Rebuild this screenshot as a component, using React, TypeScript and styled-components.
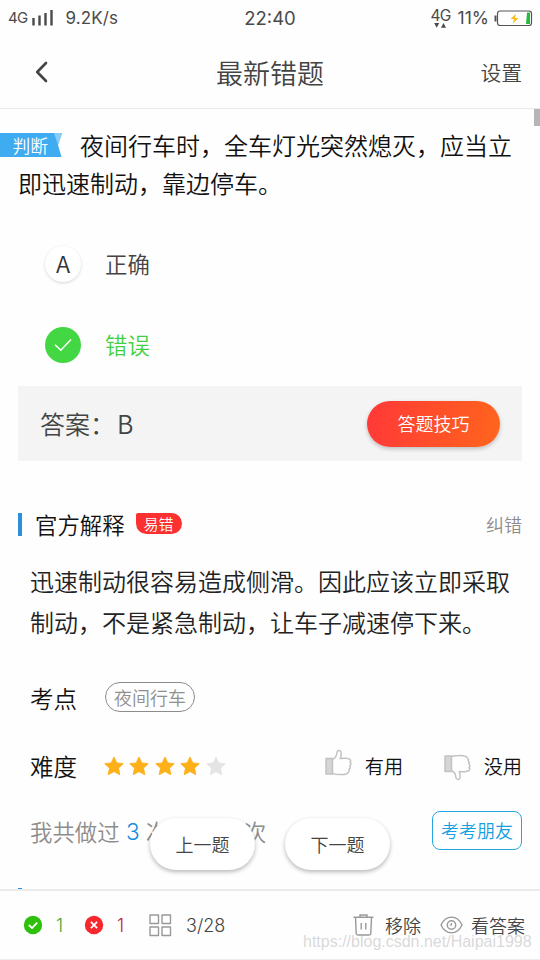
import React from "react";
import styled, { createGlobalStyle, css } from "styled-components";

const GlobalStyle = createGlobalStyle`
  *, *::before, *::after { box-sizing: border-box; }
  body {
    margin: 0;
    background: #fff;
    font-family: "Noto Sans CJK SC", sans-serif;
    font-weight: 350;
  }
`;

const latin = css`
  font-family: Inter, "Liberation Sans", sans-serif;
  font-weight: 400;
`;

const Screen = styled.div`
  position: relative;
  width: 540px;
  height: 960px;
  overflow: hidden;
  display: flex;
  flex-direction: column;
  background: #fefefe;
  color: #111;
`;

const StatusBar = styled.header`
  ${latin}
  flex: none;
  height: 37px;
  padding: 0 8px 1px 8px;
  display: grid;
  grid-template-columns: 1fr auto 1fr;
  align-items: center;
  color: #4a4a4a;
  line-height: 20px;
`;

const StatusGroup = styled.div<{ $end?: boolean }>`
  display: flex;
  align-items: center;
  justify-content: ${(p) => (p.$end ? "flex-end" : "flex-start")};
`;

const StatusText = styled.span<{ $size: number; $spacing?: number }>`
  font-size: ${(p) => p.$size}px;
  letter-spacing: ${(p) => p.$spacing ?? 0}px;
  white-space: nowrap;
`;

const SignalIcon = styled.svg`
  margin: 0 12px 0 5px;
`;

const DataIcon = styled.div`
  display: flex;
  flex-direction: column;
  align-items: center;
  margin-right: 7px;
  line-height: 14px;
`;

const BatteryIcon = styled.svg`
  margin-left: 5px;
  margin-right: -1px;
`;

const TitleBar = styled.nav`
  flex: none;
  height: 72px;
  padding: 0 18px 2px 34px;
  display: grid;
  grid-template-columns: 1fr auto 1fr;
  align-items: center;
  border-bottom: 1px solid #e9e9e9;
  color: #444;
`;

const PageTitle = styled.h1`
  margin: 2px 0 0 -16px;
  font-size: 27px;
  line-height: 40px;
  font-weight: 350;
`;

const Settings = styled.button`
  justify-self: end;
  padding: 0;
  border: 0;
  background: none;
  color: #444;
  font: 350 20.8px/30px "Noto Sans CJK SC", sans-serif;
`;

const Content = styled.main`
  flex: none;
  height: 780px;
  overflow: hidden;
  padding: 17px 18px 0;
`;

const Question = styled.section`
  font-size: 24px;
  line-height: 37.5px;
  color: #111;
  height: 75px;
`;

const QuestionLine = styled.div`
  display: flex;
  align-items: center;
  height: 37.5px;
  white-space: nowrap;
`;

const KindTag = styled.span`
  position: relative;
  flex: none;
  width: 62px;
  height: 24px;
  margin: 0 18px 0 -18px;
  padding-left: 12.5px;
  color: #fff;
  font-size: 17.8px;
  line-height: 25px;
`;

const KindRibbon = styled.svg`
  position: absolute;
  inset: 0;
  z-index: 0;
`;

const KindText = styled.span`
  position: relative;
`;

const Options = styled.ul`
  list-style: none;
  margin: 22px 0 0;
  padding: 0 0 1px;
`;

const Option = styled.li<{ $correct?: boolean }>`
  display: flex;
  align-items: center;
  height: 81px;
  padding-left: 27px;
  gap: 24px;
  font-size: 22.4px;
  color: ${(p) => (p.$correct ? "#43d143" : "#444")};
`;

const OptionLabel = styled.span`
  margin-top: -2px;
`;

const OptionMark = styled.span<{ $correct?: boolean }>`
  width: 36px;
  height: 36px;
  border-radius: 50%;
  display: flex;
  align-items: center;
  justify-content: center;
  background: ${(p) => (p.$correct ? "#43d743" : "#fff")};
  box-shadow: ${(p) => (p.$correct ? "none" : "0 1px 3px rgba(0, 0, 0, 0.16)")};
  color: #333;
  line-height: 32px;
`;

const OptionLetter = styled.span`
  margin-top: -2px;
  font-size: 23.5px;
`;

const AnswerBar = styled.section`
  height: 75px;
  display: flex;
  align-items: center;
  justify-content: space-between;
  padding: 0 22px;
  background: #f4f4f4;
  color: #444;
  font-size: 25px;
`;

const AnswerText = styled.span`
  margin-top: -2px;
`;

const AnswerLetter = styled.span`
  margin-left: 2px;
`;

const TipsButton = styled.button`
  width: 133px;
  height: 46px;
  border: 0;
  border-radius: 23px;
  padding: 0 0 2px;
  background: linear-gradient(100deg, #ff3838, #ff651c);
  box-shadow: 0 2px 4px rgba(0, 0, 0, 0.22);
  color: #fff;
  font: 350 18px "Noto Sans CJK SC", sans-serif;
`;

const ExplainHead = styled.div`
  height: 38px;
  margin-top: 44px;
  display: flex;
  align-items: center;
`;

const Accent = styled.i`
  width: 4px;
  height: 23px;
  background: #2b8ede;
  margin-right: 13px;
`;

const ExplainTitle = styled.h2`
  margin: -1px 0 0;
  font-size: 22.4px;
  line-height: 34px;
  font-weight: 350;
  color: #111;
`;

const HotBadge = styled.span`
  width: 46px;
  height: 21px;
  margin: -2px 0 0 11px;
  border-radius: 2px 11px 11px 11px;
  background: #fb3030;
  color: #fff;
  font-size: 15px;
  line-height: 21px;
  text-align: center;
`;

const Report = styled.a`
  margin-left: auto;
  font-size: 18px;
  line-height: 28px;
  color: #8c8c8c;
`;

const Paragraph = styled.p`
  margin: 17px 0 22px 12px;
  font-size: 24px;
  line-height: 41px;
  color: #222;
  white-space: nowrap;
`;

const InfoRow = styled.div<{ $height: number }>`
  height: ${(p) => p.$height}px;
  padding-left: 12px;
  display: flex;
  align-items: center;
`;

const Label = styled.span`
  width: 75px;
  margin-top: -1px;
  font-size: 23.5px;
  color: #111;
`;

const TopicChip = styled.span`
  width: 90px;
  height: 30px;
  margin-top: -2px;
  border: 1.5px solid #8c8c8c;
  border-radius: 15px;
  color: #8f8f8f;
  font-size: 18px;
  line-height: 28px;
  text-align: center;
`;

const Stars = styled.div`
  display: flex;
  gap: 5.5px;
  margin-left: -1.5px;
`;

const Votes = styled.div`
  margin-left: auto;
  display: flex;
  gap: 42px;
`;

const Vote = styled.span`
  display: flex;
  align-items: center;
  gap: 12px;
  font-size: 19.2px;
  line-height: 28px;
  color: #111;
`;

const ThumbIcon = styled.svg<{ $down?: boolean }>`
  margin-left: -1px;
  margin-right: 0.5px;
  transform: ${(p) => (p.$down ? "translateY(1px) scaleY(-1)" : "translateY(-4px)")};
`;

const History = styled.span`
  display: flex;
  align-items: center;
  font-size: 22.4px;
  color: #8d8d8d;
`;

const Count = styled.b`
  font-family: Inter, sans-serif;
  font-size: 22.5px;
  font-weight: 350;
  color: #168fe0;
  margin: 0 6px 0 6.5px;
`;

const LastUnit = styled.span`
  margin-left: 76px;
`;

const QuizFriend = styled.button`
  margin: -2px 0 0 auto;
  width: 90px;
  height: 39px;
  padding: 0;
  border: 1.5px solid #27a7e2;
  border-radius: 8px;
  background: #fff;
  color: #16a0e0;
  font: 350 18px "Noto Sans CJK SC", sans-serif;
`;

const NextSection = styled.div`
  height: 23px;
  margin-top: 26px;
  display: flex;
`;

const Pager = styled.div`
  position: absolute;
  left: 150px;
  top: 818px;
  display: flex;
  gap: 30px;
`;

const PagerButton = styled.button`
  width: 105px;
  height: 52px;
  border: 0;
  border-radius: 26px;
  background: #fff;
  box-shadow: 0 2px 4px rgba(0, 0, 0, 0.28);
  color: #444;
  font: 350 18px "Noto Sans CJK SC", sans-serif;
`;

const ScrollThumb = styled.div`
  position: absolute;
  right: 0;
  top: 109px;
  width: 6px;
  height: 17px;
  background: #b5b5b5;
`;

const BottomBar = styled.footer`
  flex: none;
  height: 71px;
  padding: 0 15px 0 23px;
  display: flex;
  align-items: center;
  border-top: 2px solid #ebebeb;
  border-bottom: 1px solid #eee;
  background: #fefefe;
`;

const Tally = styled.span<{ $color: string; $width: number }>`
  width: ${(p) => p.$width}px;
  display: flex;
  align-items: center;
  gap: 13px;
  color: ${(p) => p.$color};
  font: 350 18px Inter, sans-serif;
`;

const Progress = styled.span`
  display: flex;
  align-items: center;
  gap: 14px;
  color: #444;
  font: 350 18px Inter, sans-serif;
`;

const Actions = styled.div`
  margin-left: auto;
  display: flex;
  gap: 19px;
`;

const Action = styled.span<{ $gap: number }>`
  display: flex;
  align-items: center;
  gap: ${(p) => p.$gap}px;
  color: #444;
  font-size: 18px;
  white-space: nowrap;
`;

const Watermark = styled.div`
  position: absolute;
  left: 303px;
  top: 932px;
  color: rgba(170, 170, 170, 0.45);
  font: 16px/20px "Liberation Sans", sans-serif;
  white-space: nowrap;
`;

const Star = ({ on }: { on: boolean }) => (
  <svg width="20" height="20" viewBox="0 0 20 20">
    <path
      d="M10 1 12.8 6.9 19.2 7.7 14.5 12.1 15.8 18.7 10 15.5 4.2 18.7 5.5 12.1 0.8 7.7 7.2 6.9Z"
      fill={on ? "#fdb018" : "#e4e4e4"}
      stroke={on ? "#fdb018" : "#e4e4e4"}
      strokeLinejoin="round"
      strokeWidth="0.9"
    />
  </svg>
);

const Thumb = ({ down }: { down?: boolean }) => (
  <ThumbIcon $down={down} width="27" height="27" viewBox="0 0 27 27">
    <g fill="none" stroke="#c2c2c2" strokeWidth="1.5" strokeLinejoin="round">
      <path d="M1 9.5h6.5V25H1z" fill="#d5d5d5" />
      <path d="M7.5 10.2C10.8 9.3 11.6 7 11.9 3.8C12.1 .8 15.2 .7 16 3.3C16.5 5.4 15.9 7.7 15.3 9.6C18.2 8.9 23.2 9 24.8 10.3C26.2 11.6 25.8 12.8 25.1 13.4C26.3 14.5 26 16 24.8 17C25.6 18.2 25 19.6 24.1 20.2C24.6 21.6 24.1 22.5 23.3 23.2C22.3 25.6 18.6 25.7 15.2 25.6C12 25.6 9.4 25.3 7.5 24.3" />
    </g>
  </ThumbIcon>
);

const RoundMark = ({ ok }: { ok: boolean }) => (
  <svg width="20" height="20" viewBox="0 0 20 20">
    <circle cx="10" cy="10" r="9.2" fill={ok ? "#2fc00d" : "#f6282e"} />
    <path
      d={ok ? "M5.8 10 9 13 14.2 7.6" : "M6.9 6.9 13.1 13.1M13.1 6.9 6.9 13.1"}
      fill="none"
      stroke="#fff"
      strokeWidth="1.8"
    />
  </svg>
);

export default function App() {
  return (
    <Screen>
      <GlobalStyle />
      <StatusBar>
        <StatusGroup>
          <StatusText $size={15} $spacing={-0.7}>4G</StatusText>
          <SignalIcon width="21" height="16" viewBox="0 0 21 16">
            <path d="M1.5 8v7.5M7.5 5.5v10M13.5 3v12.5M19.5 0v15.5" stroke="#4a4a4a" strokeWidth="2.4" />
          </SignalIcon>
          <StatusText $size={17} $spacing={0.1}>9.2K/s</StatusText>
        </StatusGroup>
        <StatusText $size={18.5}>22:40</StatusText>
        <StatusGroup $end>
          <DataIcon>
            <StatusText $size={15.5} $spacing={-0.7}>4G</StatusText>
            <svg width="12" height="5" viewBox="0 0 12 5">
              <path d="M.2 0h5L2.7 4.8zM7 4.8h5L9.5 0z" fill="#4a4a4a" />
            </svg>
          </DataIcon>
          <StatusText $size={17.5}>11%</StatusText>
          <BatteryIcon width="39" height="17" viewBox="0 0 39 17">
            <rect x="3.5" y="1" width="34" height="14.5" rx="2.5" fill="none" stroke="#555" strokeWidth="1.2" />
            <path d="M1.5 5.5v6" stroke="#555" strokeWidth="2" />
            <path d="M33 2.5h3v11.5h-4z" fill="#27bb42" />
            <path d="M22 3.8 16.5 9h3.7l-1.4 4.4L24.6 8h-3.8z" fill="#f9b916" />
          </BatteryIcon>
        </StatusGroup>
      </StatusBar>

      <TitleBar>
        <svg width="16" height="22" viewBox="0 0 16 22">
          <path d="M12 2 3.2 11 12 20" fill="none" stroke="#444" strokeWidth="2.6" strokeLinecap="round" strokeLinejoin="round" />
        </svg>
        <PageTitle>最新错题</PageTitle>
        <Settings>设置</Settings>
      </TitleBar>

      <Content>
        <Question>
          <QuestionLine>
            <KindTag>
              <KindRibbon width="62" height="24" viewBox="0 0 62 24">
                <path d="M0 0H62L58 12 61.5 24H0z" fill="#3fabf0" />
                <path d="M54 0H62L58 12z" fill="#86cdf8" />
              </KindRibbon>
              <KindText>判断</KindText>
            </KindTag>
            夜间行车时，全车灯光突然熄灭，应当立
          </QuestionLine>
          <QuestionLine>即迅速制动，靠边停车。</QuestionLine>
        </Question>

        <Options>
          <Option>
            <OptionMark>
              <OptionLetter>A</OptionLetter>
            </OptionMark>
            <OptionLabel>正确</OptionLabel>
          </Option>
          <Option $correct>
            <OptionMark $correct>
              <svg width="18" height="14" viewBox="0 0 18 14">
                <path d="M1 6.8 6.8 12.2 17 1.5" fill="none" stroke="#fff" strokeWidth="1.5" />
              </svg>
            </OptionMark>
            <OptionLabel>错误</OptionLabel>
          </Option>
        </Options>

        <AnswerBar>
          <AnswerText>
            答案：<AnswerLetter>B</AnswerLetter>
          </AnswerText>
          <TipsButton>答题技巧</TipsButton>
        </AnswerBar>

        <ExplainHead>
          <Accent />
          <ExplainTitle>官方解释</ExplainTitle>
          <HotBadge>易错</HotBadge>
          <Report>纠错</Report>
        </ExplainHead>
        <Paragraph>
          迅速制动很容易造成侧滑。因此应该立即采取
          <br />
          制动，不是紧急制动，让车子减速停下来。
        </Paragraph>

        <InfoRow $height={68}>
          <Label>考点</Label>
          <TopicChip>夜间行车</TopicChip>
        </InfoRow>
        <InfoRow $height={68}>
          <Label>难度</Label>
          <Stars>
            {[1, 2, 3, 4, 5].map((n) => (
              <Star key={n} on={n <= 4} />
            ))}
          </Stars>
          <Votes>
            <Vote>
              <Thumb />
              有用
            </Vote>
            <Vote>
              <Thumb down />
              没用
            </Vote>
          </Votes>
        </InfoRow>
        <InfoRow $height={62}>
          <History>
            我共做过<Count>3</Count>次<LastUnit>次</LastUnit>
          </History>
          <QuizFriend>考考朋友</QuizFriend>
        </InfoRow>
        <NextSection>
          <Accent />
        </NextSection>
      </Content>

      <BottomBar>
        <Tally $color="#43a936" $width={61}>
          <RoundMark ok />1
        </Tally>
        <Tally $color="#c5203a" $width={65}>
          <RoundMark ok={false} />1
        </Tally>
        <Progress>
          <svg width="23" height="23" viewBox="0 0 23 23">
            <path d="M1 1h8.5v8.5H1zM13 1h8.5v8.5H13zM1 13h8.5v8.5H1zM13 13h8.5v8.5H13z" fill="none" stroke="#999" strokeWidth="1.4" strokeLinejoin="round" />
          </svg>
          3/28
        </Progress>
        <Actions>
          <Action $gap={11}>
            <svg width="21" height="22" viewBox="0 0 21 22">
              <path d="M.5 3.2h20M7 3V1h7v2M2.5 3.5 3.2 19.5Q3.3 21 5 21h11q1.7 0 1.8-1.5L18.5 3.5M8.2 9v6.5M12.8 9v6.5" fill="none" stroke="#999" strokeWidth="1.4" />
            </svg>
            移除
          </Action>
          <Action $gap={8}>
            <svg width="23" height="18" viewBox="0 0 23 18">
              <path d="M1 9C6-1.5 17-1.5 22 9C17 19.5 6 19.5 1 9Z" fill="none" stroke="#999" strokeWidth="1.4" />
              <circle cx="11.5" cy="9" r="4.2" fill="none" stroke="#999" strokeWidth="1.4" />
              <path d="M11.5 7v2H9.6" fill="none" stroke="#999" strokeWidth="1.2" />
            </svg>
            看答案
          </Action>
        </Actions>
      </BottomBar>

      <Pager>
        <PagerButton>上一题</PagerButton>
        <PagerButton>下一题</PagerButton>
      </Pager>
      <ScrollThumb />
      <Watermark>https://blog.csdn.net/Haipai1998</Watermark>
    </Screen>
  );
}
